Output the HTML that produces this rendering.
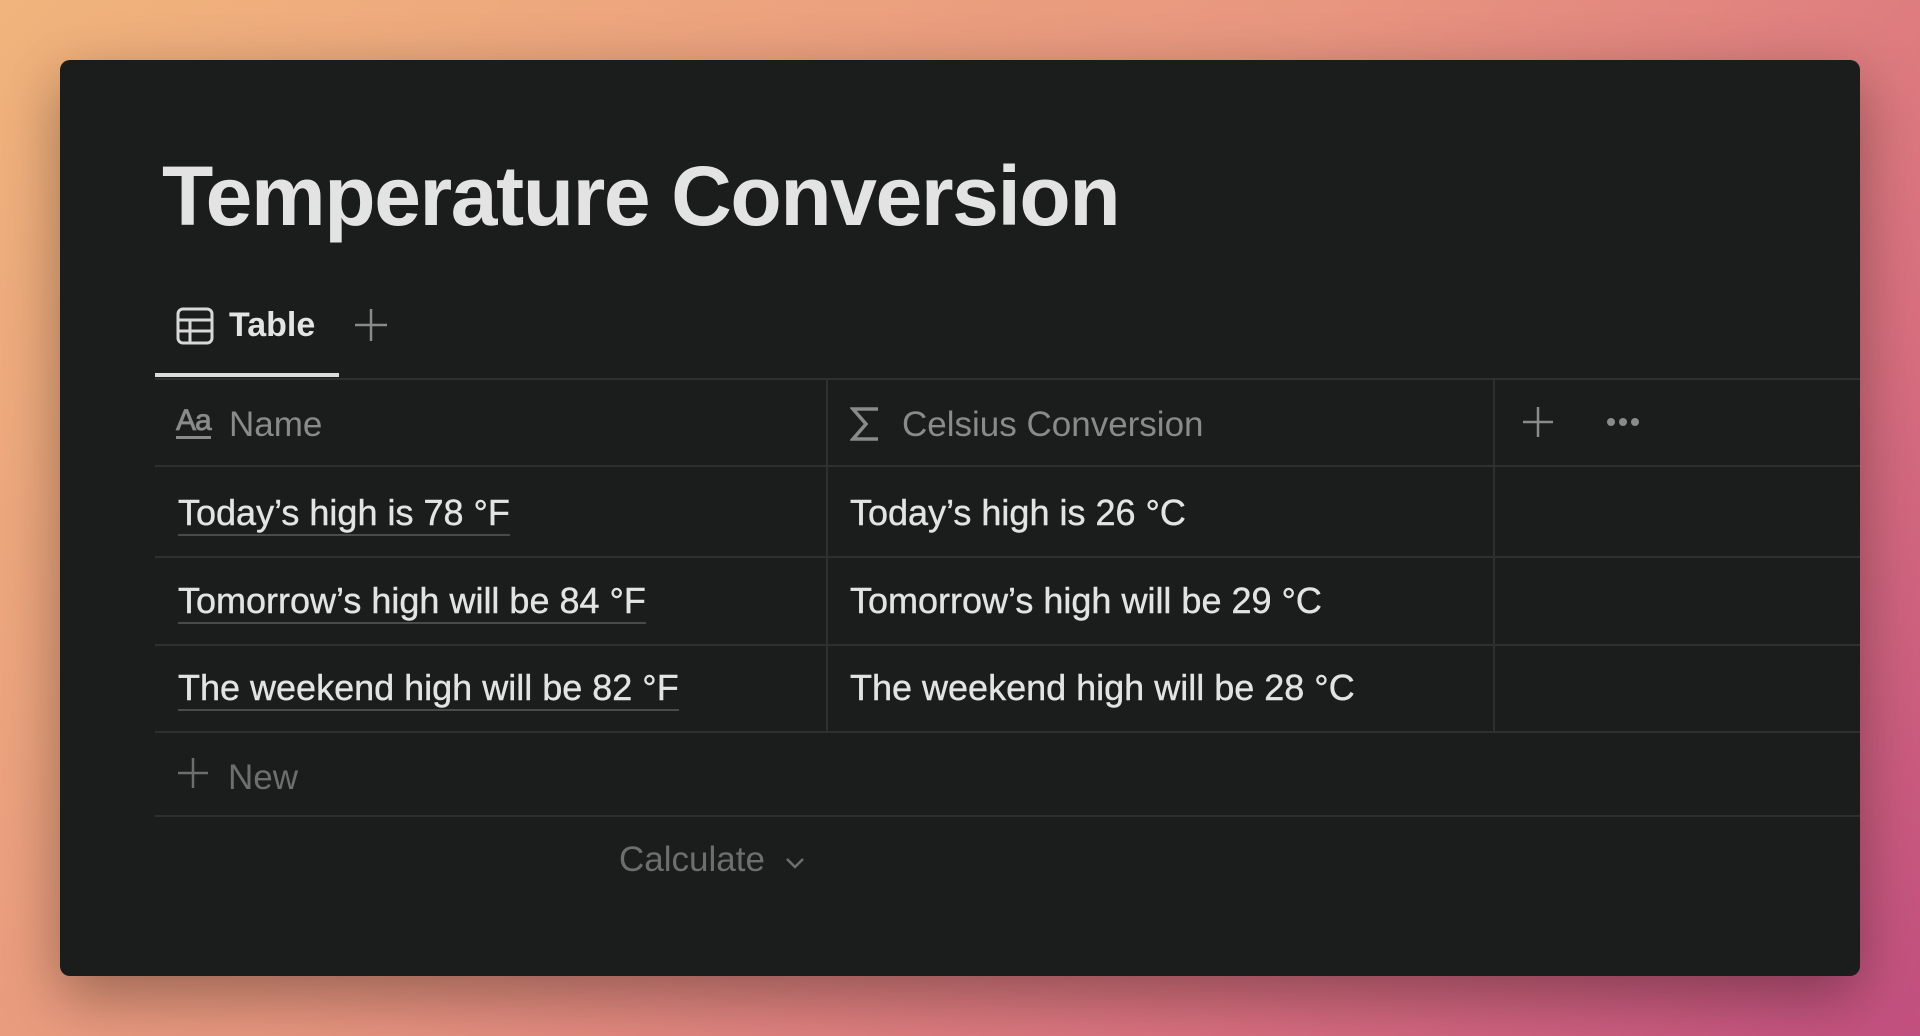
<!DOCTYPE html>
<html><head><meta charset="utf-8"><style>
*{margin:0;padding:0;box-sizing:border-box}
body{width:1920px;height:1036px;overflow:hidden;font-family:"Liberation Sans",sans-serif;
background:linear-gradient(135deg,#f1b47c 0%,#e8967f 45%,#d9707f 75%,#c24f7f 100%);position:relative}
.win{position:absolute;left:60px;top:60px;width:1800px;height:916px;background:#1b1c1c;border-radius:10px;box-shadow:0 20px 60px rgba(0,0,0,.35);overflow:hidden}
.abs{position:absolute;white-space:nowrap}
h1{position:absolute;left:102px;top:88px;font-size:84px;font-weight:bold;color:#e3e3e3;letter-spacing:-1.4px}
.t{font-size:36px;color:#e3e3e3;-webkit-text-stroke:0.4px #e3e3e3}
.g{color:#8a8a8a;-webkit-text-stroke:0;font-size:35px}
.hl{position:absolute;height:2px;background:#2f2f2f;left:95px;right:0}
.vl{position:absolute;width:2px;background:#2f2f2f}
.u{border-bottom:2px solid #4a4a4a;padding-bottom:1px}
</style></head><body>
<div class="win">
<h1>Temperature Conversion</h1>
<svg class="abs" style="left:116px;top:247px" width="38" height="38" viewBox="0 0 38 38" fill="none" stroke="#d8d8d8" stroke-width="3"><rect x="2" y="2" width="34" height="34" rx="5"/><line x1="2" y1="13" x2="36" y2="13"/><line x1="2" y1="24" x2="36" y2="24"/><line x1="14" y1="13" x2="14" y2="36"/></svg>
<div class="abs" style="left:169px;top:246px;font-weight:bold;font-size:34px;color:#e3e3e3">Table</div>
<svg class="abs" style="left:295px;top:249px" width="32" height="32" stroke="#8a8a8a" stroke-width="2.5"><line x1="16" y1="0" x2="16" y2="32"/><line x1="0" y1="16" x2="32" y2="16"/></svg>
<div class="abs" style="left:95px;top:313px;width:184px;height:4px;background:#dcdcdc"></div>
<div class="hl" style="top:318px"></div>
<div class="hl" style="top:405px"></div>
<div class="hl" style="top:496px"></div>
<div class="hl" style="top:584px"></div>
<div class="hl" style="top:671px"></div>
<div class="hl" style="top:755px"></div>
<div class="vl" style="left:766px;top:318px;height:355px"></div>
<div class="vl" style="left:1433px;top:318px;height:355px"></div>
<div class="abs" style="left:116px;top:346px;font-size:30px;color:#8a8a8a;letter-spacing:-1px;border-bottom:3px solid #8a8a8a;line-height:30px;-webkit-text-stroke:0.8px #8a8a8a">Aa</div>
<div class="abs t g" style="left:169px;top:345px">Name</div>
<svg class="abs" style="left:790px;top:346px" width="30" height="36" fill="none" stroke="#8a8a8a" stroke-width="3.5" stroke-linejoin="miter"><polyline points="28,3 3,3 16,18 3,33 28,33"/></svg>
<div class="abs t g" style="left:842px;top:345px">Celsius Conversion</div>
<svg class="abs" style="left:1463px;top:347px" width="30" height="30" stroke="#8a8a8a" stroke-width="2.5"><line x1="15" y1="0" x2="15" y2="30"/><line x1="0" y1="15" x2="30" y2="15"/></svg>
<svg class="abs" style="left:1546px;top:356px" width="34" height="12" fill="#8a8a8a"><circle cx="5" cy="6" r="4"/><circle cx="17" cy="6" r="4"/><circle cx="29" cy="6" r="4"/></svg>
<div class="abs t" style="left:118px;top:432px"><span class="u">Today’s high is 78 °F</span></div>
<div class="abs t" style="left:790px;top:432px">Today’s high is 26 °C</div>
<div class="abs t" style="left:118px;top:520px"><span class="u">Tomorrow’s high will be 84 °F</span></div>
<div class="abs t" style="left:790px;top:520px">Tomorrow’s high will be 29 °C</div>
<div class="abs t" style="left:118px;top:607px"><span class="u">The weekend high will be 82 °F</span></div>
<div class="abs t" style="left:790px;top:607px">The weekend high will be 28 °C</div>
<svg class="abs" style="left:118px;top:698px" width="30" height="30" stroke="#6e6e6e" stroke-width="2.5"><line x1="15" y1="0" x2="15" y2="30"/><line x1="0" y1="15" x2="30" y2="15"/></svg>
<div class="abs t" style="left:168px;top:698px;color:#6e6e6e;-webkit-text-stroke:0;font-size:35px">New</div>
<div class="abs t" style="left:559px;top:780px;color:#6e6e6e;-webkit-text-stroke:0;font-size:35px">Calculate</div>
<svg class="abs" style="left:725px;top:796px" width="20" height="14" fill="none" stroke="#6e6e6e" stroke-width="2.5"><polyline points="2,3 10,11 18,3"/></svg>
</div>
</body></html>
